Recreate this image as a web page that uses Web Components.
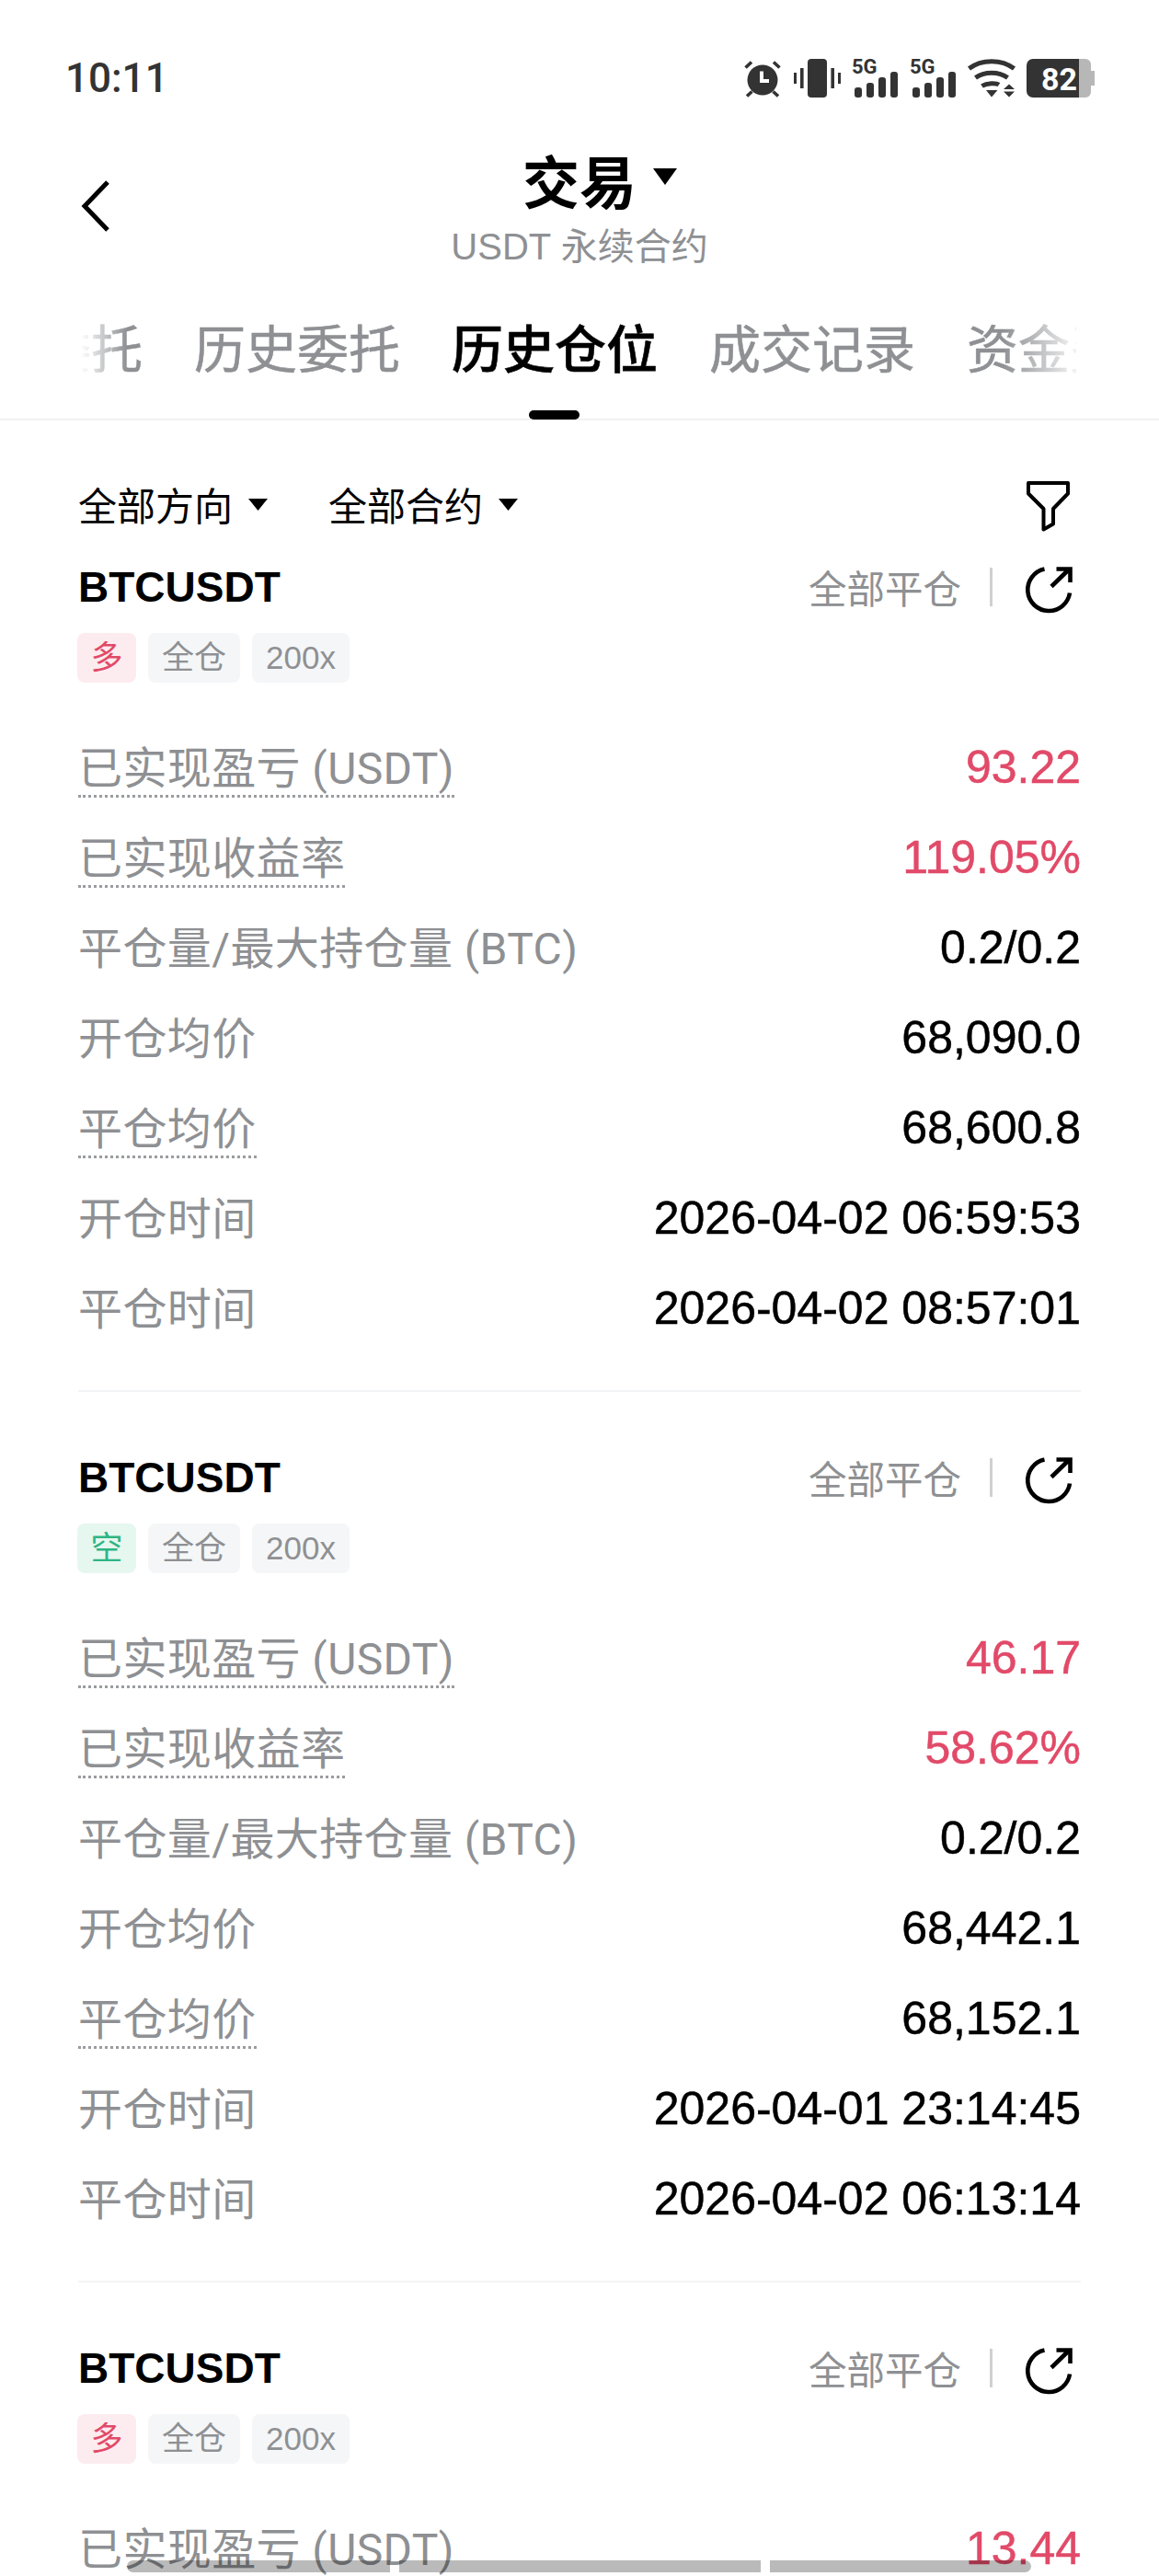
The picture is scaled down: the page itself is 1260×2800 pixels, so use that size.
<!DOCTYPE html>
<html lang="zh-CN">
<head>
<meta charset="utf-8">
<title>交易</title>
<style>
  html, body { margin: 0; background: #fff; }
  body {
    position: relative;
    width: 1260px;
    height: 2800px;
    overflow: hidden;
    font-family: "Liberation Sans", "Noto Sans CJK SC", sans-serif;
  }
</style>
</head>
<body>
<status-bar></status-bar>
<nav-header title="交易" subtitle="USDT 永续合约"></nav-header>
<tab-strip></tab-strip>
<filter-bar></filter-bar>

<position-card side="多" tone="long">
  <info-row label="已实现盈亏 (USDT)" dotted tone="red">93.22</info-row>
  <info-row label="已实现收益率" dotted tone="red">119.05%</info-row>
  <info-row label="平仓量/最大持仓量 (BTC)">0.2/0.2</info-row>
  <info-row label="开仓均价">68,090.0</info-row>
  <info-row label="平仓均价" dotted>68,600.8</info-row>
  <info-row label="开仓时间">2026-04-02 06:59:53</info-row>
  <info-row label="平仓时间">2026-04-02 08:57:01</info-row>
</position-card>

<position-card side="空" tone="short">
  <info-row label="已实现盈亏 (USDT)" dotted tone="red">46.17</info-row>
  <info-row label="已实现收益率" dotted tone="red">58.62%</info-row>
  <info-row label="平仓量/最大持仓量 (BTC)">0.2/0.2</info-row>
  <info-row label="开仓均价">68,442.1</info-row>
  <info-row label="平仓均价" dotted>68,152.1</info-row>
  <info-row label="开仓时间">2026-04-01 23:14:45</info-row>
  <info-row label="平仓时间">2026-04-02 06:13:14</info-row>
</position-card>

<position-card side="多" tone="long">
  <info-row label="已实现盈亏 (USDT)" dotted tone="red">13.44</info-row>
</position-card>

<home-bar></home-bar>

<script>
const FONT = '"Liberation Sans", "Noto Sans CJK SC", sans-serif';
const LABEL_FONT = 'Roboto, "Noto Sans CJK SC", sans-serif';

class StatusBar extends HTMLElement {
  constructor() {
    super();
    this.attachShadow({ mode: 'open' });
    const bars = `
      <rect x="3" y="31" width="8" height="11" rx="3" />
      <rect x="16" y="26" width="8" height="16" rx="3" />
      <rect x="29" y="20" width="8" height="22" rx="3" />
      <rect x="42" y="14" width="8" height="28" rx="3" />
      <text x="0" y="16" font-family="Roboto, sans-serif" font-weight="700" font-size="22">5G</text>`;
    this.shadowRoot.innerHTML = `
      <style>
        :host {
          display: flex;
          align-items: center;
          justify-content: space-between;
          height: 165px;
          padding: 5px 70px 0 71px;
          box-sizing: border-box;
        }
        .time {
          font: 500 44px Roboto, sans-serif;
          color: #333;
        }
        .icons {
          display: flex;
          align-items: center;
        }
        svg { display: block; height: 42px; fill: #333; overflow: visible; }
      </style>
      <div class="time">10:11</div>
      <div class="icons">
        <svg width="42" viewBox="0 0 42 42">
          <circle cx="21" cy="23" r="16.5" />
          <path d="M20 13.5V24H28" fill="none" stroke="#fff" stroke-width="4" />
          <path d="M2.5 9.5L9 3.5M39.5 9.5L33 3.5M4 40.5L9.5 35.5M38 40.5L32.5 35.5" fill="none" stroke="#333" stroke-width="3.6" />
        </svg>
        <svg width="51" viewBox="0 0 51 42" style="margin-left:13px">
          <rect x="15" y="0" width="21" height="42" rx="4" />
          <rect x="7" y="10" width="3.6" height="22" />
          <rect x="0" y="15" width="3" height="12" />
          <rect x="40.4" y="10" width="3.6" height="22" />
          <rect x="48" y="15" width="3" height="12" />
        </svg>
        <svg width="50" viewBox="0 0 50 42" style="margin-left:12px">${bars}</svg>
        <svg width="50" viewBox="0 0 50 42" style="margin-left:13px">${bars}</svg>
        <svg width="52" viewBox="0 0 52 42" style="margin-left:13px">
          <path d="M1.5 10.5C15 0 37 0 50.5 10.5M8.5 20.5C18 13.5 34 13.5 43.5 20.5M15.5 29.5C21 26 31 26 34 28" fill="none" stroke="#333" stroke-width="5" />
          <path d="M20 34H32.5L26 41.5Z" />
          <path d="M39 33L45 27.5L51 33ZM39 35.5H51L45 41.5Z" />
        </svg>
        <svg width="74" viewBox="0 0 74 42" style="margin-left:12px">
          <path d="M7 0H57V42H7A7 7 0 0 1 0 35V7A7 7 0 0 1 7 0Z" />
          <path d="M57 0H64A6 6 0 0 1 70 6V13H74V29H70V36A6 6 0 0 1 64 42H57Z" fill="#b7b7b7" />
          <text x="16" y="33.5" fill="#fff" font-family="Roboto, sans-serif" font-weight="700" font-size="34">82</text>
        </svg>
      </div>
    `;
  }
}

class NavHeader extends HTMLElement {
  constructor() {
    super();
    this.attachShadow({ mode: 'open' });
    this.shadowRoot.innerHTML = `
      <style>
        :host {
          display: block;
          position: relative;
          height: 135px;
          font-family: ${FONT};
          text-align: center;
        }
        .back {
          position: absolute;
          left: 88px;
          top: 31px;
        }
        .title {
          display: flex;
          justify-content: center;
          align-items: center;
          height: 60px;
          font-size: 62px;
          font-weight: 700;
          color: #000;
        }
        .title svg { margin: 0 -44px 6px 18px; }
        .sub {
          margin-top: 19px;
          line-height: 48px;
          font-size: 40px;
          color: #8e9093;
        }
      </style>
      <svg class="back" width="36" height="56" viewBox="0 0 36 56">
        <path d="M29 2L4 28L29 54" fill="none" stroke="#000" stroke-width="5" />
      </svg>
      <div class="title"><span></span>
        <svg width="26" height="18" viewBox="0 0 26 18"><path d="M0 0H26L13 18Z" fill="#000" /></svg>
      </div>
      <div class="sub"></div>
    `;
    this.shadowRoot.querySelector('.title span').textContent = this.getAttribute('title');
    this.shadowRoot.querySelector('.sub').textContent = this.getAttribute('subtitle');
  }
}

class TabStrip extends HTMLElement {
  constructor() {
    super();
    this.attachShadow({ mode: 'open' });
    this.shadowRoot.innerHTML = `
      <style>
        :host {
          display: block;
          position: relative;
          height: 155px;
          border-bottom: 2px solid #f1f2f3;
          padding: 0 90px 0 88px;
          font-family: ${FONT};
        }
        .scroller {
          height: 155px;
          overflow: hidden;
          -webkit-mask-image: linear-gradient(to right, transparent, #000 50px, #000 calc(100% - 80px), rgba(0, 0, 0, 0.12));
          mask-image: linear-gradient(to right, transparent, #000 50px, #000 calc(100% - 80px), rgba(0, 0, 0, 0.12));
        }
        .list {
          display: flex;
          gap: 56px;
          margin-left: -157px;
          width: max-content;
          padding-top: 47px;
        }
        .tab {
          font-size: 56px;
          line-height: 68px;
          font-weight: 400;
          -webkit-text-stroke: 0.5px #8e9093;
          color: #8e9093;
        }
        .tab.on { color: #000; font-weight: 500; -webkit-text-stroke: 0.6px #000; }
        .mark {
          position: absolute;
          left: 575px;
          bottom: -1px;
          width: 55px;
          height: 10px;
          border-radius: 5px;
          background: #000;
        }
      </style>
      <div class="scroller">
        <div class="list">
          <div class="tab">当前委托</div>
          <div class="tab">历史委托</div>
          <div class="tab on">历史仓位</div>
          <div class="tab">成交记录</div>
          <div class="tab">资金费用</div>
        </div>
      </div>
      <div class="mark"></div>
    `;
  }
}

class FilterBar extends HTMLElement {
  constructor() {
    super();
    this.attachShadow({ mode: 'open' });
    const caret = '<svg width="21" height="13" viewBox="0 0 21 13"><path d="M0 0H21L10.5 13Z" fill="#000" /></svg>';
    this.shadowRoot.innerHTML = `
      <style>
        :host {
          display: flex;
          align-items: center;
          height: 66px;
          margin-top: 60px;
          padding: 0 97px 0 85px;
          font-family: ${FONT};
          font-size: 42px;
          color: #000;
        }
        .pick { display: flex; align-items: center; gap: 17px; margin-right: 66px; padding-bottom: 6px; }
        .pick svg { margin-top: 2px; }
        .funnel { margin-left: auto; display: block; }
      </style>
      <div class="pick">全部方向 ${caret}</div>
      <div class="pick">全部合约 ${caret}</div>
      <svg class="funnel" width="47" height="55" viewBox="0 0 47 55">
        <path d="M2 2H45V13.5L29 30V46.5L18.5 52.5V30L2 13.5Z" fill="none" stroke="#000" stroke-width="4" stroke-linejoin="round" />
      </svg>
    `;
  }
}

class PositionCard extends HTMLElement {
  constructor() {
    super();
    this.attachShadow({ mode: 'open' });
    const long = this.getAttribute('tone') === 'long';
    this.shadowRoot.innerHTML = `
      <style>
        :host {
          display: block;
          margin: 65px 85px 0;
          padding-bottom: 37px;
          border-bottom: 2px solid #f3f4f5;
          font-family: ${FONT};
        }
        :host(:first-of-type) { margin-top: 27px; }
        :host(:last-of-type) { border-bottom: 0; }
        .head {
          display: flex;
          align-items: center;
          height: 56px;
        }
        .name {
          font-size: 46px;
          font-weight: 700;
          color: #000;
        }
        .close {
          margin-left: auto;
          font-size: 41.5px;
          color: #8e9093;
        }
        .rule {
          width: 3px;
          height: 42px;
          margin: 0 35px 0 31px;
          background: #cfd0d2;
        }
        .share { display: block; margin: 6px 9px 0 0; }
        .tags {
          display: flex;
          gap: 13px;
          margin: 22px 0 46px -1px;
        }
        .tag {
          height: 54px;
          line-height: 54px;
          padding: 0 15px;
          border-radius: 8px;
          background: #f5f6f7;
          color: #8e9093;
          font-size: 35px;
        }
        .side {
          padding: 0 14.5px;
          background: ${long ? '#fdecef' : '#e6f7f0'};
          color: ${long ? '#e14a68' : '#2fb583'};
        }
      </style>
      <div class="head">
        <div class="name">BTCUSDT</div>
        <div class="close">全部平仓</div>
        <div class="rule"></div>
        <svg class="share" width="52" height="52" viewBox="0 0 52 52">
          <path d="M21.5 3.5A23 23 0 1 0 49 29.5" fill="none" stroke="#000" stroke-width="4.6" />
          <path d="M29 22.5L47 5M34.5 3.5H49.5V18" fill="none" stroke="#000" stroke-width="4.6" />
        </svg>
      </div>
      <div class="tags">
        <div class="tag side"></div>
        <div class="tag">全仓</div>
        <div class="tag">200x</div>
      </div>
      <slot></slot>
    `;
    this.shadowRoot.querySelector('.side').textContent = this.getAttribute('side');
  }
}

class InfoRow extends HTMLElement {
  constructor() {
    super();
    this.attachShadow({ mode: 'open' });
    this.shadowRoot.innerHTML = `
      <style>
        :host {
          display: flex;
          align-items: center;
          justify-content: space-between;
          height: 98px;
          font-family: ${FONT};
        }
        .label {
          box-sizing: border-box;
          height: 60px;
          line-height: 58px;
          font-family: ${LABEL_FONT};
          font-size: 48px;
          letter-spacing: 0.4px;
          color: #8e9093;
        }
        :host([dotted]) .label { border-bottom: 3px dotted #9a9c9f; }
        .value {
          padding-bottom: 7px;
          font-size: 50px;
          -webkit-text-stroke: 0.5px currentColor;
          color: #000;
        }
        :host([tone="red"]) .value { color: #e14a68; }
      </style>
      <div class="label"></div>
      <div class="value"><slot></slot></div>
    `;
    this.shadowRoot.querySelector('.label').textContent = this.getAttribute('label');
  }
}

// gesture bar segments lie over the last row, so these are absolute
class HomeBar extends HTMLElement {
  constructor() {
    super();
    this.attachShadow({ mode: 'open' });
    this.shadowRoot.innerHTML = `
      <style>
        :host {
          position: absolute;
          left: 138px;
          top: 2783px;
          display: flex;
          gap: 10px;
          width: 983px;
          height: 13px;
        }
        div { background: rgba(0, 0, 0, 0.27); }
        .a { width: 286px; border-radius: 7px 0 0 7px; }
        .b { width: 393px; }
        .c { width: 284px; border-radius: 0 7px 7px 0; }
      </style>
      <div class="a"></div><div class="b"></div><div class="c"></div>
    `;
  }
}

customElements.define('status-bar', StatusBar);
customElements.define('nav-header', NavHeader);
customElements.define('tab-strip', TabStrip);
customElements.define('filter-bar', FilterBar);
customElements.define('position-card', PositionCard);
customElements.define('info-row', InfoRow);
customElements.define('home-bar', HomeBar);
</script>
</body>
</html>
